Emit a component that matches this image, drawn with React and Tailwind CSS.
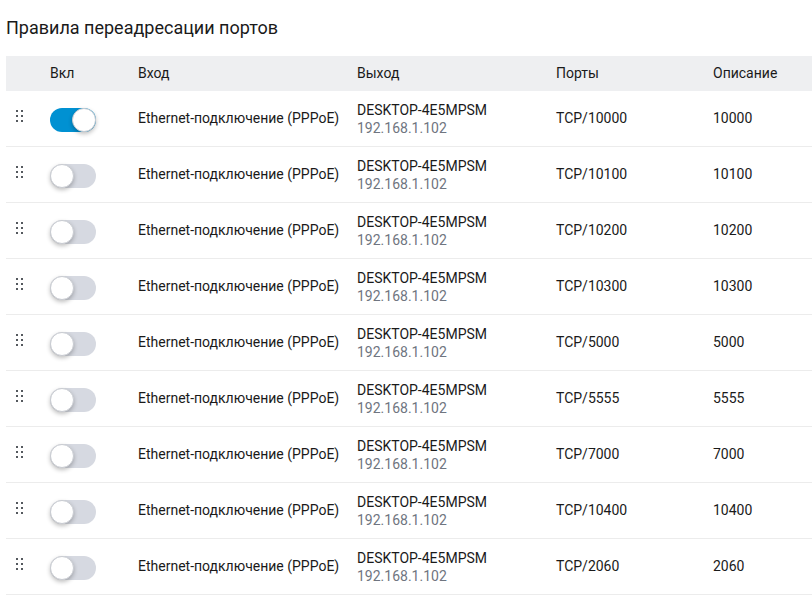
import React from "react";

const rules = [
  { on: true, port: "TCP/10000", desc: "10000" },
  { on: false, port: "TCP/10100", desc: "10100" },
  { on: false, port: "TCP/10200", desc: "10200" },
  { on: false, port: "TCP/10300", desc: "10300" },
  { on: false, port: "TCP/5000", desc: "5000" },
  { on: false, port: "TCP/5555", desc: "5555" },
  { on: false, port: "TCP/7000", desc: "7000" },
  { on: false, port: "TCP/10400", desc: "10400" },
  { on: false, port: "TCP/2060", desc: "2060" },
];

const DragHandle = () => (
  <div className="grid grid-cols-2 gap-x-[3px] gap-y-[3px] w-[7px]">
    {[0, 1, 2, 3, 4, 5].map((i) => (
      <span key={i} className="block w-[2px] h-[2px] bg-[#55595f]" />
    ))}
  </div>
);

const Toggle = ({ on }) => (
  <div
    className={
      "relative w-[46px] h-[24px] rounded-full " +
      (on ? "bg-[#0091d2]" : "bg-[#d6d9e1]")
    }
  >
    <span
      className={
        "absolute top-0 w-[24px] h-[24px] rounded-full bg-white border border-[#c9ccd2] shadow-[0_2px_4px_rgba(0,0,0,0.25)] " +
        (on ? "right-0" : "left-0")
      }
    />
  </div>
);

const App = () => {
  return (
    <div
      className="w-[812px] h-[608px] bg-white text-[#1a1a1a] overflow-hidden"
      style={{ fontFamily: "Roboto, 'Liberation Sans', sans-serif" }}
    >
      <h1 className="text-[18px] leading-none pl-[6px] pt-[19px] pb-[19px] text-[#1a1a1a]">
        Правила переадресации портов
      </h1>
      <div className="ml-[6px] text-[14px]">
        <div className="flex items-center h-[35px] bg-[#eeeff1]">
          <div className="w-[44px]" />
          <div className="w-[88px]">Вкл</div>
          <div className="w-[219px]">Вход</div>
          <div className="w-[199px]">Выход</div>
          <div className="w-[157px]">Порты</div>
          <div>Описание</div>
        </div>
        {rules.map((r, i) => (
          <div
            key={i}
            className="flex items-center h-[56px] border-b border-[#ececec]"
          >
            <div className="w-[44px] pl-[10px] pb-[6px]">
              <DragHandle />
            </div>
            <div className="w-[88px] pt-[2px]">
              <Toggle on={r.on} />
            </div>
            <div className="w-[219px]">Ethernet-подключение (PPPoE)</div>
            <div className="w-[199px] flex flex-col leading-[18px]">
              <span>DESKTOP-4E5MPSM</span>
              <span className="text-[#6f7580]">192.168.1.102</span>
            </div>
            <div className="w-[157px]">{r.port}</div>
            <div>{r.desc}</div>
          </div>
        ))}
      </div>
    </div>
  );
};

export default App;
